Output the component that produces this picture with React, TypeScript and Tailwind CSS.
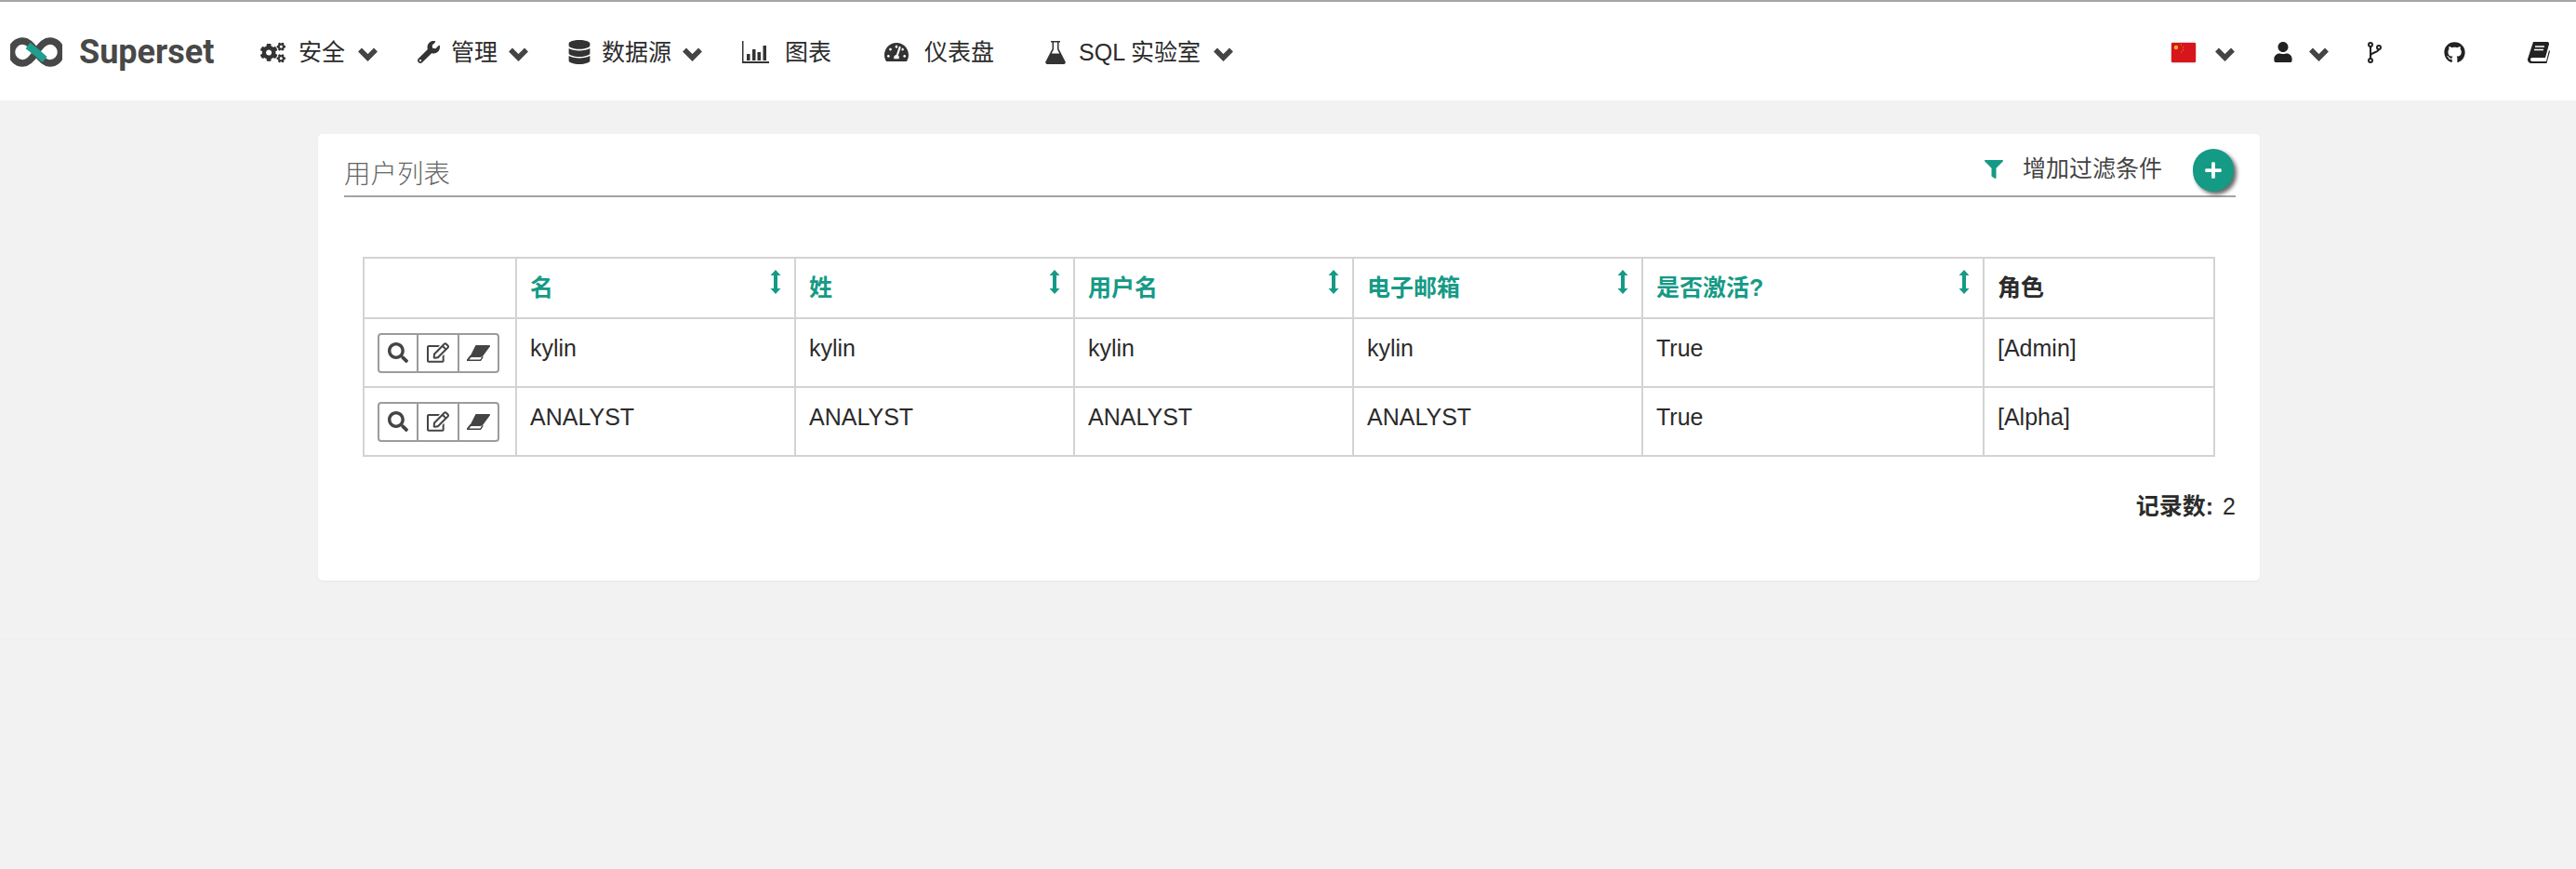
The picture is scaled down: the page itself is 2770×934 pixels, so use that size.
import { ReactNode } from "react";
import { FaCogs, FaDatabase, FaFilter, FaGithub, FaPlus, FaRegEdit, FaSearch, FaTachometerAlt, FaUser, FaWrench } from "react-icons/fa";

const SANS = "font-['Liberation_Sans','Noto_Sans_CJK_SC',sans-serif]";

function Logo() {
  return (
    <svg width="56" height="32" viewBox="0 0 56 32" fill="none">
      <path d="M28 16C23 8 19 4 13.500 4a12 12 0 0 0 0 24C19 28 23 24 28 16Z" stroke="#484848" strokeWidth="7.500" />
      <path d="M28 16C33 8 37 4 42.500 4a12 12 0 0 1 0 24C37 28 33 24 28 16Z" stroke="#484848" strokeWidth="7.500" />
      <path d="M19 9l9 7 9 8" stroke="#1fa08f" strokeWidth="8" />
    </svg>
  );
}

function BarChart() {
  return (
    <svg width="29" height="24" viewBox="0 0 29 24" fill="#333">
      <path d="M0 0h1.500v22H29v2H0Z" />
      <path d="M5 14h3.500v7H5ZM11 9h3.500v12H11ZM16.500 12H20v9h-3.500ZM22.500 5H26v16h-3.500Z" />
    </svg>
  );
}

function Flask() {
  return (
    <svg width="22" height="25" viewBox="0 0 22 25" fill="#333">
      <path d="M6 0h10v1.500h-1.500v7L21.500 22a2 2 0 0 1-1.800 3H2.300a2 2 0 0 1-1.800-3L7.500 8.500v-7H6ZM9 1.500v7.400L6.800 13.500h8.400L13 8.900V1.500Z" />
    </svg>
  );
}

function Fork() {
  return (
    <svg width="15" height="23" viewBox="0 0 15 23" fill="none" stroke="#222" strokeWidth="2">
      <circle cx="3" cy="3" r="2" />
      <circle cx="3" cy="20" r="2" />
      <circle cx="12" cy="6" r="2" />
      <path d="M3 5v13M3 15c0-4 8-3 9-7" />
    </svg>
  );
}

function Book() {
  return (
    <svg width="24" height="23" viewBox="0 0 24 23">
      <path d="M6 0h15a2 2 0 0 1 2 2.500L19 17H5a2 2 0 0 0 0 4h15l3-12 1 1-3.500 13H4a4 4 0 0 1-4-4.500Z" fill="#222" />
      <path d="M8 5h10M7 8.500h10" stroke="#fff" strokeWidth="1.500" />
    </svg>
  );
}

function Eraser() {
  return (
    <svg width="25" height="17" viewBox="0 0 25 17" fill="#444">
      <path d="M9.500 0H24a1 1 0 0 1 .8 1.500L17 12H3.500Z" />
      <path d="M3.500 11 .4 15a1 1 0 0 0 .8 2H15l3-4.500M2.500 15.500h11.800L16 13H4.500Z" fillRule="evenodd" />
    </svg>
  );
}

function Flag() {
  return (
    <svg width="26" height="21" viewBox="0 0 26 21" className="drop-shadow-[0_0_1px_#999]">
      <rect width="26" height="21" rx="1" fill="#d8141c" />
      <circle cx="5" cy="5" r="2.200" fill="#e8b923" />
      <path d="M10 2h1M12 5h1M12 8h1M10 10h1" stroke="#e8a023" strokeWidth="1" />
    </svg>
  );
}

function SortArrow() {
  return (
    <svg width="12" height="26" viewBox="0 0 12 26" fill="#159a86">
      <path d="M6 0l5.500 6H8v14h3.500L6 26 .5 20H4V6H.5Z" />
    </svg>
  );
}

const Chevron = ({ className = "" }: { className?: string }) => (
  <svg width="23" height="16" viewBox="0 0 23 16" fill="none" className={className}>
    <path d="M3 3.500l8.500 8.500L20 3.500" stroke="#444" strokeWidth="5.500" />
  </svg>
);

const navItems: { icon: ReactNode; label: string; chevron?: boolean; box: string; gap: string }[] = [
  { icon: <FaCogs className="w-[27px] h-[27px] text-[#333]" />, label: "安全", chevron: true, box: "ml-[47px]", gap: "gap-[14px]" },
  { icon: <FaWrench className="w-[24px] h-[24px] text-[#333]" />, label: "管理", chevron: true, box: "ml-[42px]", gap: "gap-[12px]" },
  { icon: <FaDatabase className="w-[24px] h-[26px] text-[#333]" />, label: "数据源", chevron: true, box: "ml-[42px]", gap: "gap-[12px]" },
  { icon: <BarChart />, label: "图表", box: "ml-[42px]", gap: "gap-[17px]" },
  { icon: <FaTachometerAlt className="w-[26px] h-[26px] text-[#333]" />, label: "仪表盘", box: "ml-[57px]", gap: "gap-[17px]" },
  { icon: <Flask />, label: "SQL 实验室", chevron: true, box: "ml-[55px]", gap: "gap-[14px]" },
];

const columns = [
  { label: "名", width: "w-[300px]", sort: true },
  { label: "姓", width: "w-[300px]", sort: true },
  { label: "用户名", width: "w-[300px]", sort: true },
  { label: "电子邮箱", width: "w-[311px]", sort: true },
  { label: "是否激活?", width: "w-[367px]", sort: true },
  { label: "角色", width: "w-[248px]", sort: false },
];

const rows = [
  ["kylin", "kylin", "kylin", "kylin", "True", "[Admin]"],
  ["ANALYST", "ANALYST", "ANALYST", "ANALYST", "True", "[Alpha]"],
];

function RowActions() {
  return (
    <div className="flex w-[131px] h-[43px] rounded-[4px] border-2 border-[#9c9c9c] divide-x-2 divide-[#9c9c9c] text-[#444]">
      <div className="w-[42px] flex items-center justify-center"><FaSearch className="w-[22px] h-[22px]" /></div>
      <div className="w-[44px] flex items-center justify-center"><FaRegEdit className="w-[24px] h-[22px]" /></div>
      <div className="flex-1 flex items-center justify-center"><Eraser /></div>
    </div>
  );
}

export default function App() {
  return (
    <div className={`min-h-screen bg-[#f2f2f2] text-[25px] text-[#2b2b2b] ${SANS}`}>
      <nav className="h-[108px] bg-white border-t-2 border-[#a6a6a6] flex items-center pl-[11px] pt-[2px]">
        <Logo />
        <span className="ml-[18px] text-[36px] leading-none font-bold text-[#484848] font-['Roboto',sans-serif] w-[148px]">Superset</span>
        {navItems.map((item) => (
          <div key={item.label} className={`flex items-center ${item.box} ${item.gap}`}>
            {item.icon}
            <span className="leading-none">{item.label}</span>
            {item.chevron && <Chevron className="-ml-px mt-[3px]" />}
          </div>
        ))}
        <div className="ml-auto flex items-center">
          <Flag />
          <Chevron className="ml-[20px] mt-[3px]" />
          <FaUser className="ml-[41px] w-[20px] h-[22px] text-[#222]" />
          <Chevron className="ml-[17px] mt-[3px]" />
          <div className="ml-[41px]"><Fork /></div>
          <FaGithub className="ml-[67px] w-[23px] h-[23px] text-[#222]" />
          <div className="ml-[67px] mr-[28px]"><Book /></div>
        </div>
      </nav>

      <main className="pt-[36px] pb-[62px] border-b border-[#ededed]">
        <section className="ml-[342px] w-[2088px] h-[480px] bg-white rounded-[5px] shadow-[0_1px_2px_rgba(0,0,0,0.05)] pt-[16px] pl-[28px] pr-[26px]">
          <header className="h-[52px] border-b-2 border-[#a3a3a3] flex items-start justify-between">
            <h1 className="text-[28.500px] leading-[54px] font-light text-[#666]">用户列表</h1>
            <div className="flex items-center h-[46px] mr-[2px]">
              <FaFilter className="w-[20px] h-[20px] text-[#159a86] -mt-[2px]" />
              <span className="ml-[21px] text-[#444] -mt-[2px]">增加过滤条件</span>
              <button className="ml-[33px] w-[44px] h-[46px] rounded-full bg-[#159a86] shadow-[3px_3px_4px_rgba(0,0,0,0.6)] flex items-center justify-center">
                <FaPlus className="w-[20px] h-[20px] text-white" />
              </button>
            </div>
          </header>

          <table className="mt-[64px] ml-[20px] w-[1992px] table-fixed border-collapse">
            <thead>
              <tr className="h-[65px]">
                <th className="w-[164px] border-2 border-[#d3d3d3]" />
                {columns.map((col) => (
                  <th key={col.label} className={`${col.width} border-2 border-[#d3d3d3] pl-[14px] pr-[15px] text-left align-top`}>
                    <div className={`flex justify-between pt-[13px] leading-[36px] ${col.sort ? "text-[#159a86]" : "text-[#2b2b2b]"}`}>
                      <span>{col.label}</span>
                      {col.sort && <span className="-mt-[1px] -mr-[1px]"><SortArrow /></span>}
                    </div>
                  </th>
                ))}
              </tr>
            </thead>
            <tbody>
              {rows.map((row) => (
                <tr key={row[0]} className="h-[74px]">
                  <td className="border-2 border-[#d3d3d3] pl-[14px]"><RowActions /></td>
                  {row.map((cell, i) => (
                    <td key={i} className="border-2 border-[#d3d3d3] pl-[14px] pr-[15px] pt-[13px] align-top leading-[36px]">{cell}</td>
                  ))}
                </tr>
              ))}
            </tbody>
          </table>

          <div className="mt-[35px] flex justify-end leading-[36px]">
            <strong>记录数:</strong>
            <span className="ml-[10px]">2</span>
          </div>
        </section>
      </main>
    </div>
  );
}
